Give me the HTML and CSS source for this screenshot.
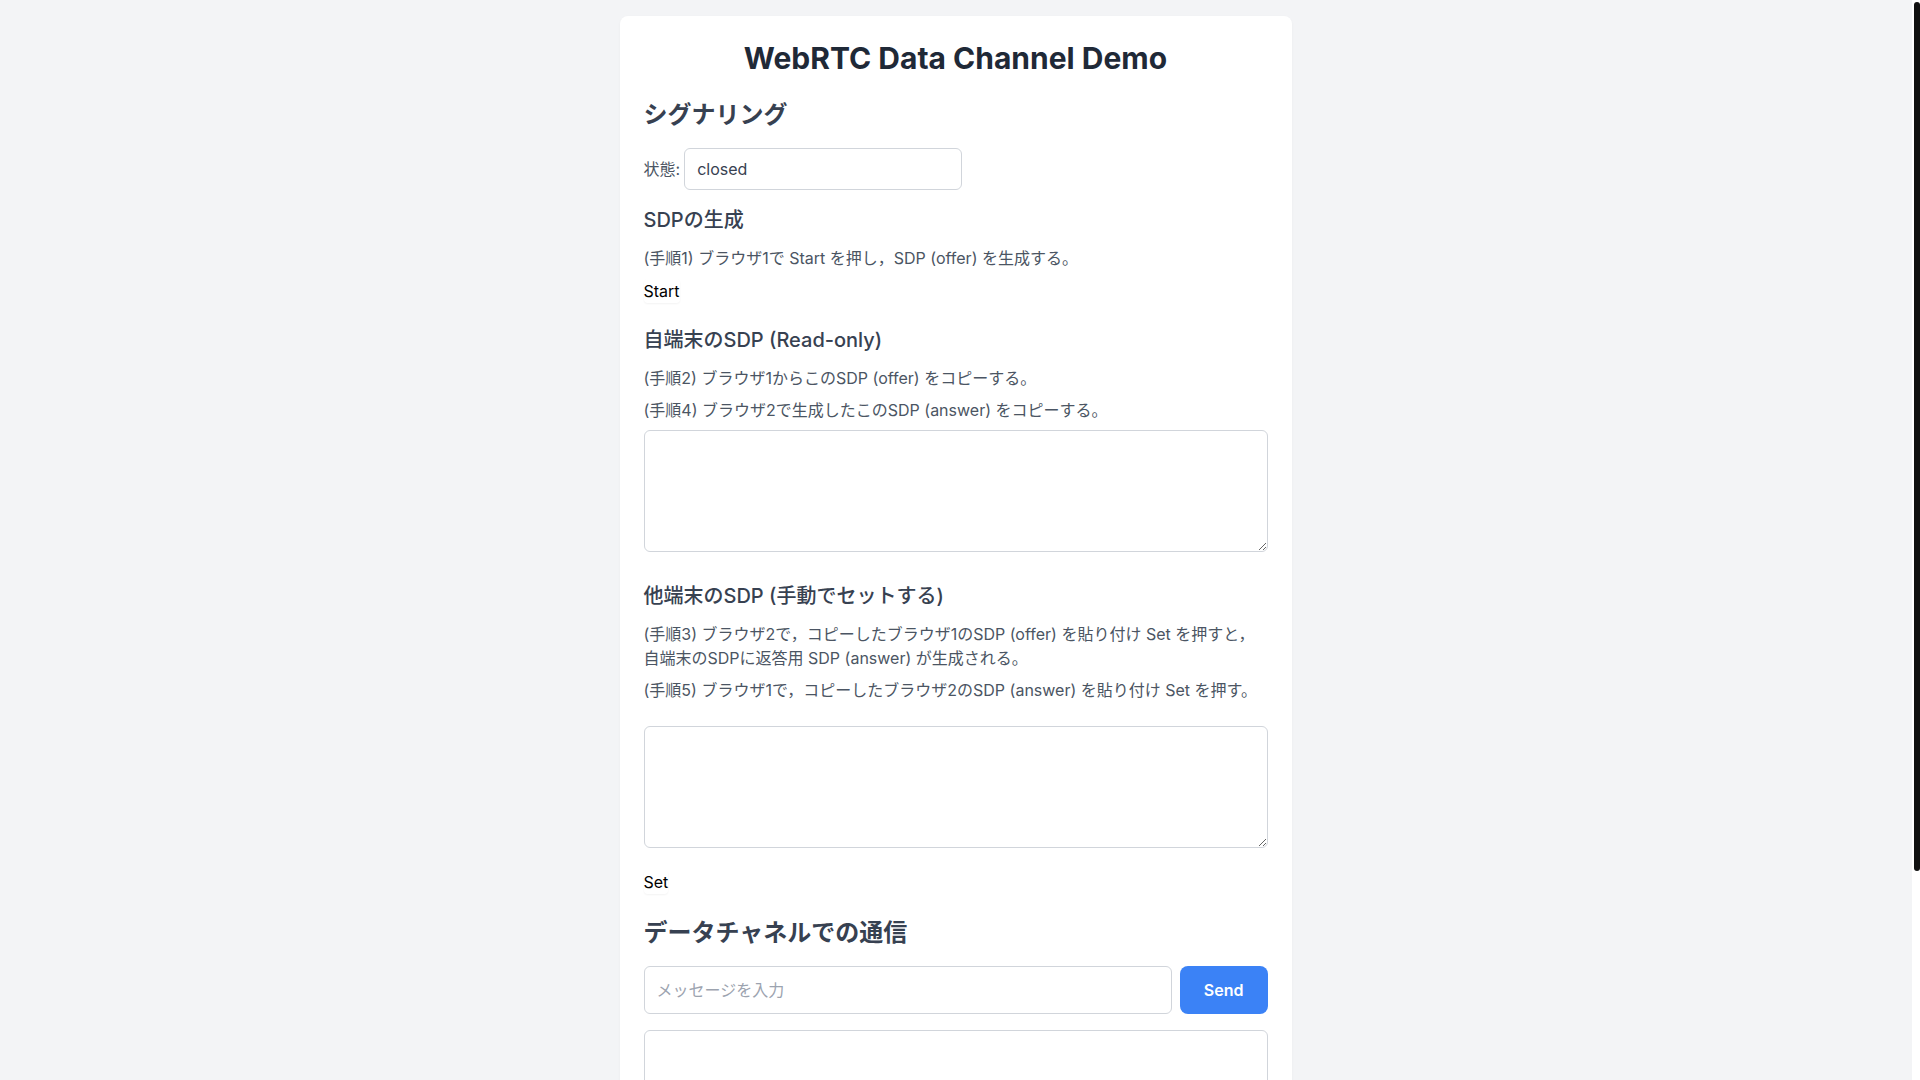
FILE: index.html
```html
<!DOCTYPE html>
<html lang="ja">
<head>
<meta charset="utf-8">
<title>WebRTC Data Channel Demo</title>
<link rel="stylesheet" href="styles.css">
</head>
<body>
<main class="card">
  <h1 class="title">WebRTC Data Channel Demo</h1>

  <section>
    <h2 class="heading">シグナリング</h2>
    <div class="state-row">
      <label class="state-label" for="state">状態:</label>
      <input id="state" class="state-input" type="text" value="closed" readonly>
    </div>
  </section>

  <section class="sub sub-first">
    <h3 class="subheading">SDPの生成</h3>
    <p class="desc desc-gap">(手順1) ブラウザ1で Start を押し，SDP (offer) を生成する。</p>
    <button class="plain-btn" type="button">Start</button>
  </section>

  <section class="sub sub-second">
    <h3 class="subheading">自端末のSDP (Read-only)</h3>
    <p class="desc">(手順2) ブラウザ1からこのSDP (offer) をコピーする。</p>
    <p class="desc">(手順4) ブラウザ2で生成したこのSDP (answer) をコピーする。</p>
    <textarea class="sdp-box" readonly></textarea>
  </section>

  <section class="sub sub-third">
    <h3 class="subheading">他端末のSDP (手動でセットする)</h3>
    <p class="desc">(手順3) ブラウザ2で，コピーしたブラウザ1のSDP (offer) を貼り付け Set を押すと，<br>自端末のSDPに返答用 SDP (answer) が生成される。</p>
    <p class="desc desc-before-box">(手順5) ブラウザ1で，コピーしたブラウザ2のSDP (answer) を貼り付け Set を押す。</p>
    <textarea class="sdp-box"></textarea>
    <button class="plain-btn set-btn" type="button">Set</button>
  </section>

  <section class="chat">
    <h2 class="heading">データチャネルでの通信</h2>
    <div class="msg-row">
      <input class="msg-input" type="text" placeholder="メッセージを入力">
      <button class="send-btn" type="button">Send</button>
    </div>
    <div class="log"></div>
  </section>
</main>
<div class="scrollbar" aria-hidden="true"><div class="scrollbar-thumb"></div></div>
</body>
</html>
```
FILE: styles.css
```css
html {
  background: #f3f4f6;
}

* {
  box-sizing: border-box;
}

body {
  margin: 0;
  padding: 16px 25px 16px 16px;
  background: #f3f4f6;
  font-family: Inter, "Noto Sans CJK JP", "Noto Sans", sans-serif;
  font-size: 16px;
  line-height: 24px;
  color: #111827;
}

h1, h2, h3, p {
  margin: 0;
}

.card {
  max-width: 672px;
  margin: 0 auto;
  background: #ffffff;
  border-radius: 8px;
  padding: 24px;
  box-shadow: 0 1px 3px rgba(0, 0, 0, 0.04);
}

.title {
  font-size: 30px;
  line-height: 36px;
  font-weight: 700;
  text-align: center;
  color: #1f2937;
  margin-bottom: 23px;
}

.heading {
  font-size: 24px;
  line-height: 32px;
  font-weight: 600;
  color: #374151;
  margin-bottom: 17px;
}

.subheading {
  font-size: 20px;
  line-height: 28px;
  font-weight: 500;
  color: #374151;
  margin-bottom: 12px;
}

.state-row {
  display: flex;
  align-items: center;
  gap: 4px;
}

.state-label {
  color: #4b5563;
}

.state-input {
  width: 278px;
  height: 42px;
  padding: 8px 12px;
  border: 1px solid #d1d5db;
  border-radius: 6px;
  font: inherit;
  color: #374151;
  background: #ffffff;
  outline: none;
}

.sub-first {
  margin-top: 16px;
}

.sub-second {
  margin-top: 23px;
}

.sub-third {
  margin-top: 30px;
}

.desc {
  color: #4b5563;
  margin-bottom: 8px;
}

.desc-gap {
  margin-bottom: 9px;
}

.desc-before-box {
  margin-bottom: 24px;
}

.plain-btn {
  display: block;
  padding: 0;
  border: 0;
  background: transparent;
  font: inherit;
  color: #000000;
  border-radius: 4px;
  box-shadow: 0 1px 2px rgba(0, 0, 0, 0.05);
  cursor: pointer;
}

.set-btn {
  margin-top: 22px;
}

.sdp-box {
  display: block;
  width: 100%;
  height: 122px;
  padding: 8px 12px;
  border: 1px solid #d1d5db;
  border-radius: 6px;
  font: inherit;
  background: #ffffff;
  resize: vertical;
  outline: none;
}

.chat {
  margin-top: 23px;
}

.msg-row {
  display: flex;
  gap: 8px;
}

.msg-input {
  flex: 1;
  height: 48px;
  padding: 12px;
  border: 1px solid #d1d5db;
  border-radius: 6px;
  font: inherit;
  color: #374151;
  outline: none;
}

.msg-input::placeholder {
  color: #9ca3af;
}

.send-btn {
  height: 48px;
  padding: 0 24px;
  border: 0;
  border-radius: 8px;
  background: #3b82f6;
  color: #ffffff;
  font: inherit;
  font-weight: 600;
  cursor: pointer;
}

.log {
  margin-top: 16px;
  height: 272px;
  border: 1px solid #d1d5db;
  border-radius: 6px;
  background: #ffffff;
}

.scrollbar {
  position: fixed;
  top: 0;
  right: 0;
  width: 8px;
  height: 100vh;
  background: #ffffff;
}

.scrollbar-thumb {
  position: absolute;
  top: 2px;
  left: 2px;
  right: 0;
  height: 869px;
  background: #111111;
  border-radius: 3px;
}
```
